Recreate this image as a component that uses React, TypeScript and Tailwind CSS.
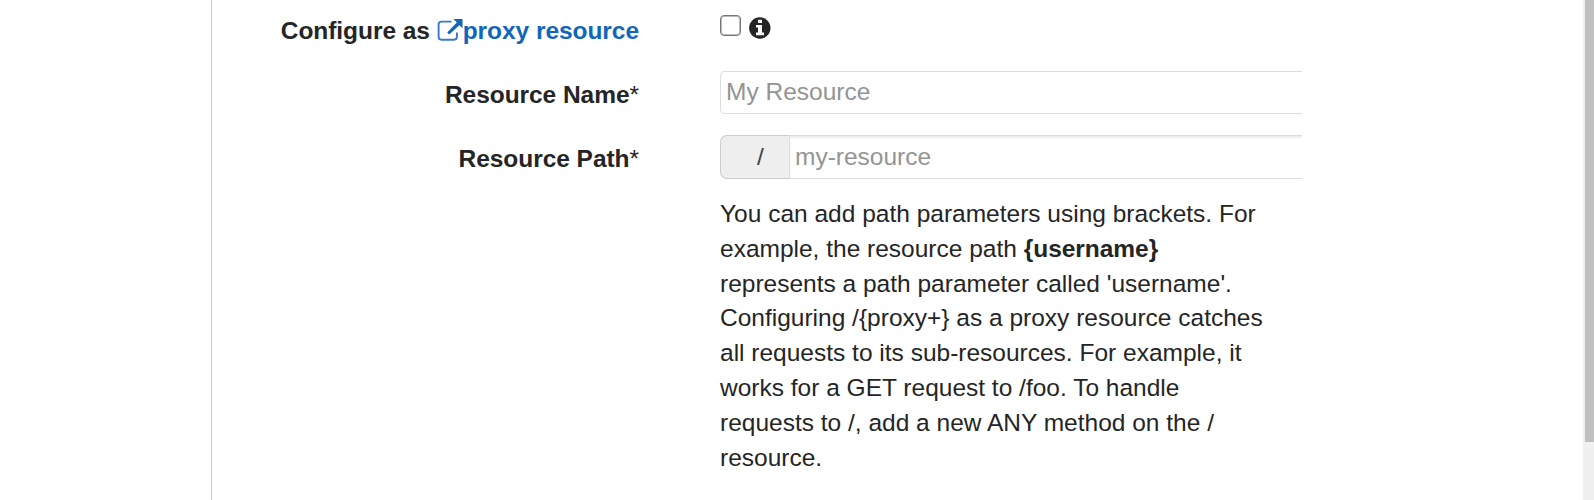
import React, { useState } from "react";

interface FormRowProps {
  label: React.ReactNode;
  children: React.ReactNode;
  className?: string;
}

const ExternalLinkIcon: React.FC = () => (
  <svg
    className="inline-block h-6 w-[26px] align-[-3px]"
    viewBox="0 0 26 24"
    fill="none"
  >
    <path
      d="M14.5 3.6H4.5Q1.6 3.6 1.6 6.5V18.8Q1.6 21.7 4.5 21.7H17Q19.9 21.7 19.9 18.8V14.5"
      stroke="#3b78c4"
      strokeWidth="1.9"
    />
    <path d="M16.5 1H25.5V10.2L22.4 7.2L12.2 16.6L10.2 14.6L19.8 4.4Z" fill="#1166bb" />
  </svg>
);

const InfoIcon: React.FC = () => (
  <svg className="h-[22px] w-[22px]" viewBox="0 0 22 22">
    <circle cx="10.8" cy="11" r="10.7" fill="#252525" />
    <path d="M9 2.7H13V6H9ZM7 8H13V15.5H15V18.2H7V15.5H9V10.6H7Z" fill="#fff" />
  </svg>
);

const FormRow: React.FC<FormRowProps> = ({ label, children, className = "" }) => (
  <div className={`flex ${className}`}>
    <div className="w-[427px] shrink-0 pt-1.5 text-right font-bold tracking-[-0.05px]">
      {label}
    </div>
    <div className="ml-[81px] w-[582px] shrink-0">{children}</div>
  </div>
);

const App: React.FC = () => {
  const [isProxy, setIsProxy] = useState(false);
  const [name, setName] = useState("");
  const [path, setPath] = useState("");

  return (
    <div className="flex h-[500px] w-full overflow-hidden bg-white font-['Liberation_Sans',Arial,sans-serif] text-[24.5px] leading-[35px] text-[#252525]">
      <div className="w-[211px] shrink-0" />

      <main className="flex-1 overflow-hidden border-l border-[#cccccc] pt-[7px]">
        <FormRow
          className="h-16"
          label={
            <>
              Configure as{" "}
              <a href="#" className="text-[#1166bb]">
                <ExternalLinkIcon />
                proxy resource
              </a>
            </>
          }
        >
          <div className="flex items-start gap-2 pt-2">
            <input
              type="checkbox"
              checked={isProxy}
              onChange={(e) => setIsProxy(e.target.checked)}
              className="h-[21px] w-[21px] appearance-none rounded-[4px] border border-[#767676] bg-white shadow-[inset_0_0_0_1px_rgba(118,118,118,0.5)] checked:bg-[#1166bb]"
            />
            <span className="pt-0.5">
              <InfoIcon />
            </span>
          </div>
        </FormRow>

        <FormRow
          className="h-16"
          label={
            <>
              Resource Name<span className="font-normal">*</span>
            </>
          }
        >
          <input
            type="text"
            value={name}
            onChange={(e) => setName(e.target.value)}
            placeholder="My Resource"
            className="block h-[43px] w-full rounded-l-[5px] border border-r-0 border-[#dddddd] px-[5px] pb-0.5 placeholder:text-[#949494] focus:outline-none"
          />
        </FormRow>

        <FormRow
          label={
            <>
              Resource Path<span className="font-normal">*</span>
            </>
          }
        >
          <div className="flex h-11 overflow-hidden">
            <span className="w-[69px] shrink-0 rounded-l-[7px] border border-r-0 border-[#cccccc] bg-[#eeeeee] pt-[3px] pl-9 text-[#444444]">
              /
            </span>
            <input
              type="text"
              value={path}
              onChange={(e) => setPath(e.target.value)}
              placeholder="my-resource"
              className="w-[530px] shrink-0 border border-[#dddddd] px-[5px] pb-0.5 shadow-[inset_0_2px_2px_rgba(0,0,0,0.075)] placeholder:text-[#949494] focus:outline-none"
            />
          </div>
          <p className="mt-[17.7px] w-[550px] leading-[34.9px]">
            You can add path parameters using brackets. For example, the resource path{" "}
            <strong className="tracking-[-0.04px]">&#123;username&#125;</strong>{" "}
            represents a path parameter called 'username'. Configuring
            /&#123;proxy+&#125; as a proxy resource catches all requests to its
            sub-resources. For example, it works for a GET request to /foo. To handle
            requests to /, add a new ANY method on the / resource.
          </p>
        </FormRow>
      </main>

      {/* Scrollbar */}
      <div className="w-[11px] shrink-0 bg-[#f0f0f0] pl-0.5">
        <div className="h-[442px] bg-[#c0c0c0]" />
      </div>
    </div>
  );
};

export default App;
